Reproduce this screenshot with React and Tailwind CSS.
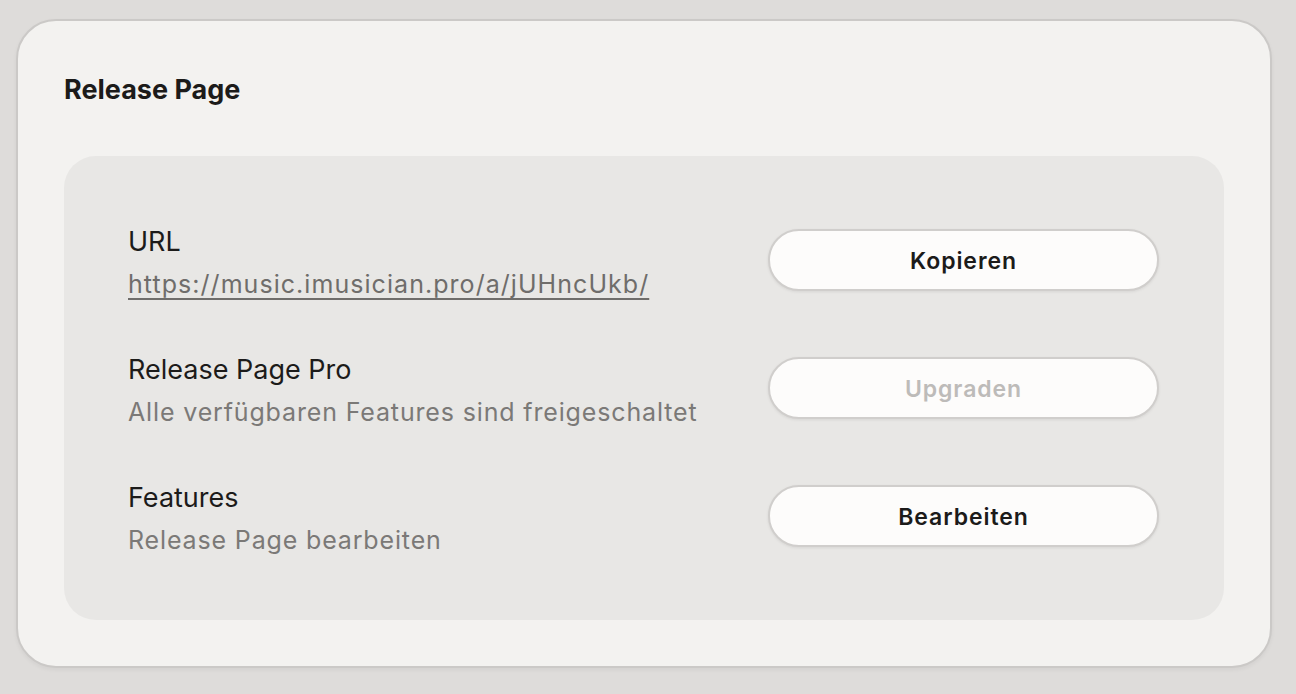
const rows = [
  { label: 'URL', sub: 'https://music.imusician.pro/a/jUHncUkb/', link: true, action: 'Kopieren' },
  { label: 'Release Page Pro', sub: 'Alle verfügbaren Features sind freigeschaltet', action: 'Upgraden', disabled: true },
  { label: 'Features', sub: 'Release Page bearbeiten', action: 'Bearbeiten' },
]

export default function App() {
  return (
    <div className="min-h-screen bg-[#dedcda] pl-4 pr-6 pt-[19px] font-['Inter',sans-serif]">
      <div className="rounded-[40px] border-2 border-[#cbc9c7] bg-[#f3f2f0] px-[46px] pt-[50px] pb-[46px] shadow-[0_2px_4px_rgba(0,0,0,0.05)]">
        <h2 className="text-[27px] font-bold leading-[38px] text-[#1c1b1a]">Release Page</h2>

        <div className="mt-[47px] flex flex-col gap-[66px] rounded-[32px] bg-[#e8e7e5] pl-16 pr-[65px] py-[73px]">
          {rows.map((r) => (
            <div key={r.label} className="flex h-[62px] items-center justify-between">
              <div className="flex flex-col pt-[6px]">
                <span className="text-[27px] leading-[36px] text-[#1c1b1a]">{r.label}</span>
                {r.link ? (
                  <a href="#" className="mt-[6px] text-[25px] leading-[36px] tracking-[0.042em] text-[#6f6d6b] underline decoration-2 underline-offset-[5px]">
                    {r.sub}
                  </a>
                ) : (
                  <span className="mt-[6px] text-[25px] leading-[36px] tracking-[0.034em] text-[#7b7977]">{r.sub}</span>
                )}
              </div>
              <button
                className={
                  'h-[62px] w-[391px] rounded-full border-2 border-[#d0cecc] bg-[#fdfcfb] pt-[2px] text-[23px] font-semibold tracking-[0.04em] shadow-[0_1px_3px_rgba(0,0,0,0.08)] ' +
                  (r.disabled ? 'text-[#bdbbb9]' : 'text-[#1c1b1a]')
                }
              >
                {r.action}
              </button>
            </div>
          ))}
        </div>
      </div>
    </div>
  )
}
